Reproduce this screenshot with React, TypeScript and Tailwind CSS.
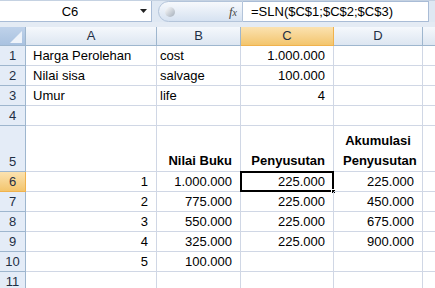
import React from "react";

type Cell = { v?: string; align?: "left" | "right" | "center"; bold?: boolean };

const colWidths = ["w-[131px]", "w-[84px]", "w-[93px]", "w-[89px]"];

const rows: { n: number; h: string; cells: Cell[] }[] = [
  { n: 1, h: "h-[20px]", cells: [{ v: "Harga Perolehan" }, { v: "cost" }, { v: "1.000.000", align: "right" }, {}] },
  { n: 2, h: "h-[20px]", cells: [{ v: "Nilai sisa" }, { v: "salvage" }, { v: "100.000", align: "right" }, {}] },
  { n: 3, h: "h-[20px]", cells: [{ v: "Umur" }, { v: "life" }, { v: "4", align: "right" }, {}] },
  { n: 4, h: "h-[20px]", cells: [{}, {}, {}, {}] },
  {
    n: 5,
    h: "h-[46px]",
    cells: [
      {},
      { v: "Nilai Buku", align: "right", bold: true },
      { v: "Penyusutan", align: "right", bold: true },
      { v: "Akumulasi Penyusutan", align: "center", bold: true },
    ],
  },
  { n: 6, h: "h-[20px]", cells: [{ v: "1", align: "right" }, { v: "1.000.000", align: "right" }, { v: "225.000", align: "right" }, { v: "225.000", align: "right" }] },
  { n: 7, h: "h-[20px]", cells: [{ v: "2", align: "right" }, { v: "775.000", align: "right" }, { v: "225.000", align: "right" }, { v: "450.000", align: "right" }] },
  { n: 8, h: "h-[20px]", cells: [{ v: "3", align: "right" }, { v: "550.000", align: "right" }, { v: "225.000", align: "right" }, { v: "675.000", align: "right" }] },
  { n: 9, h: "h-[20px]", cells: [{ v: "4", align: "right" }, { v: "325.000", align: "right" }, { v: "225.000", align: "right" }, { v: "900.000", align: "right" }] },
  { n: 10, h: "h-[20px]", cells: [{ v: "5", align: "right" }, { v: "100.000", align: "right" }, {}, {}] },
  { n: 11, h: "h-[20px]", cells: [{}, {}, {}, {}] },
];

const alignClass = (a?: string, col?: number) => {
  if (a === "right") return "justify-end text-right pr-[8px]";
  if (a === "center") return "justify-center text-center";
  return col === 0 ? "justify-start pl-[7px]" : "justify-start pl-[3px]";
};

const App = () => {
  return (
    <div className="w-[435px] h-[288px] overflow-hidden bg-white text-[13px] text-black font-['Liberation_Sans',Arial,sans-serif]">
      {/* formula bar */}
      <div className="flex h-[22px] border-t border-[#c5d2e2] bg-[#dfe8f3]">
        <div className="flex w-[152px] items-center border-r border-b border-[#a9bcd6] bg-white">
          <span className="flex-1 text-center text-[13px] pt-[1px]">C6</span>
          <svg width="8" height="5" viewBox="0 0 8 5" className="mr-[3px]">
            <path d="M0 0h7L3.5 4z" fill="#222" />
          </svg>
        </div>
        <div className="ml-[6px] flex w-[85px] items-center rounded-l-full border border-[#b3c4da] bg-gradient-to-b from-[#f7f9fc] to-[#d6e2f1]">
          <div className="ml-[6px] h-[10px] w-[10px] rounded-full bg-gradient-to-br from-[#ffffff] to-[#a3adb9]" />
          <span className="ml-auto mr-[5px] font-['Liberation_Serif',serif] italic text-[13px] text-[#444]">
            f<span className="text-[10px]">x</span>
          </span>
        </div>
        <div className="flex w-[186px] items-center border border-l-0 border-[#a9bcd6] bg-white pl-[8px] pt-[1px] text-[13px]">
          =SLN($C$1;$C$2;$C$3)
        </div>
      </div>
      <div className="h-[5px] bg-[#e4ebf4]" />

      {/* column headers */}
      <div className="flex h-[19px] text-[#1f2f44]">
        <div className="relative w-[26px] border-r border-b border-[#9eb6ce] bg-gradient-to-b from-[#bfd2ea] to-[#a9c2e0]">
          <svg width="12" height="12" viewBox="0 0 12 12" className="absolute right-[3px] bottom-[2px]">
            <path d="M12 0V12H0z" fill="#eef3fa" />
          </svg>
        </div>
        {["A", "B", "C", "D"].map((c, i) => (
          <div
            key={c}
            className={`${colWidths[i]} flex items-center justify-center border-r border-b ${
              c === "C"
                ? "border-[#f0b24d] bg-gradient-to-b from-[#fbe2b0] to-[#f3c56c]"
                : "border-[#9eb6ce] bg-gradient-to-b from-[#f5f8fc] to-[#dde6f1]"
            }`}
          >
            {c}
          </div>
        ))}
        <div className="flex-1 border-b border-[#9eb6ce] bg-gradient-to-b from-[#f5f8fc] to-[#dde6f1]" />
      </div>

      {/* rows */}
      {rows.map((r) => (
        <div key={r.n} className={`flex ${r.h}`}>
          <div
            className={`w-[26px] flex items-end justify-center border-r border-b text-[#1f2f44] leading-[18px] ${
              r.n === 6
                ? "border-[#f0b24d] bg-gradient-to-b from-[#fbe2b0] to-[#f3c56c]"
                : "border-[#9eb6ce] bg-[#e4ecf7]"
            }`}
          >
            {r.n}
          </div>
          {r.cells.map((c, i) => {
            const selected = r.n === 6 && i === 2;
            return (
              <div
                key={i}
                className={`${colWidths[i]} relative flex items-end border-r border-b border-[#d0d7e5] leading-[18px] ${alignClass(
                  c.align,
                  i
                )} ${c.bold ? "font-bold leading-[20px]" : ""}`}
              >
                {c.v && <span className={c.align === "center" ? "w-[70px]" : ""}>{c.v}</span>}
                {selected && (
                  <>
                    <div className="absolute -left-[1px] -top-[1px] right-[-1px] bottom-[-1px] border-2 border-black" />
                    <div className="absolute right-[-3px] bottom-[-3px] h-[5px] w-[5px] bg-black border border-white" />
                  </>
                )}
              </div>
            );
          })}
          <div className="flex-1 border-b border-[#d0d7e5]" />
        </div>
      ))}
    </div>
  );
};

export default App;
